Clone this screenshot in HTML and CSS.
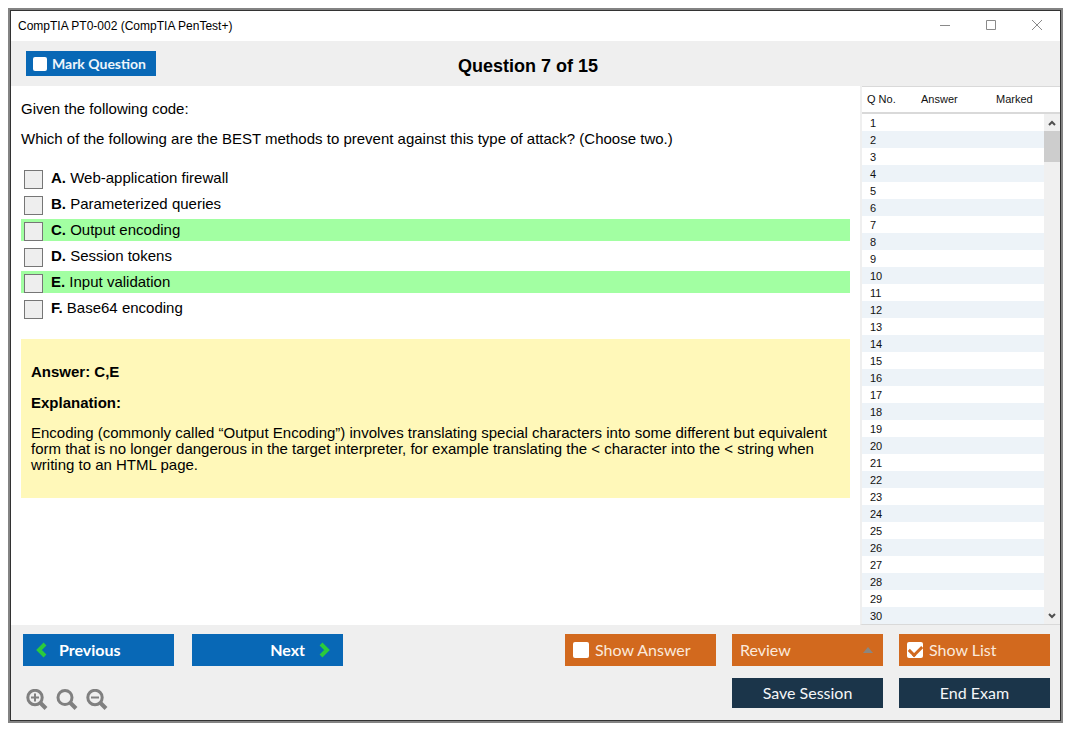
FILE: index.html
```html
<!DOCTYPE html>
<html lang="en">
<head>
<meta charset="utf-8">
<title>CompTIA PT0-002 (CompTIA PenTest+)</title>
<link rel="stylesheet" href="styles.css">
</head>
<body>
<div class="window">
  <header class="titlebar">
    <span class="titlebar-text">CompTIA PT0-002 (CompTIA PenTest+)</span>
    <div class="window-controls">
      <button type="button" aria-label="Minimize"><svg width="12" height="12" viewBox="0 0 12 12"><path d="M1 5.500h10"/></svg></button>
      <button type="button" aria-label="Maximize"><svg width="12" height="12" viewBox="0 0 12 12"><path d="M1.500 .5h9v9h-9z"/></svg></button>
      <button type="button" aria-label="Close"><svg width="12" height="12" viewBox="0 0 12 12"><path d="M1 0l10 10M11 0L1 10"/></svg></button>
    </div>
  </header>

  <div class="toolbar">
    <label class="mark"><input class="tick" type="checkbox">Mark Question</label>
    <h1 class="counter">Question 7 of 15</h1>
  </div>

  <div class="main">
    <main class="question">
      <p class="prompt">Given the following code:</p>
      <p class="prompt">Which of the following are the BEST methods to prevent against this type of attack? (Choose two.)</p>
      <div class="options">
        <label class="option"><input class="box" type="checkbox"><span><b>A.</b> Web-application firewall</span></label>
        <label class="option"><input class="box" type="checkbox"><span><b>B.</b> Parameterized queries</span></label>
        <label class="option correct"><input class="box" type="checkbox"><span><b>C.</b> Output encoding</span></label>
        <label class="option"><input class="box" type="checkbox"><span><b>D.</b> Session tokens</span></label>
        <label class="option correct"><input class="box" type="checkbox"><span><b>E.</b> Input validation</span></label>
        <label class="option"><input class="box" type="checkbox"><span><b>F.</b> Base64 encoding</span></label>
      </div>
      <section class="answer">
        <p><b>Answer: C,E</b></p>
        <p><b>Explanation:</b></p>
        <p>Encoding (commonly called “Output Encoding”) involves translating special characters into some different but equivalent form that is no longer dangerous in the target interpreter, for example translating the &lt; character into the &lt; string when writing to an HTML page.</p>
      </section>
    </main>

    <aside class="list">
      <table class="list-table">
        <thead>
          <tr><th class="col-no">Q No.</th><th class="col-answer">Answer</th><th>Marked</th></tr>
        </thead>
        <tbody>
          <tr><td>1</td><td></td><td></td></tr>
          <tr><td>2</td><td></td><td></td></tr>
          <tr><td>3</td><td></td><td></td></tr>
          <tr><td>4</td><td></td><td></td></tr>
          <tr><td>5</td><td></td><td></td></tr>
          <tr><td>6</td><td></td><td></td></tr>
          <tr><td>7</td><td></td><td></td></tr>
          <tr><td>8</td><td></td><td></td></tr>
          <tr><td>9</td><td></td><td></td></tr>
          <tr><td>10</td><td></td><td></td></tr>
          <tr><td>11</td><td></td><td></td></tr>
          <tr><td>12</td><td></td><td></td></tr>
          <tr><td>13</td><td></td><td></td></tr>
          <tr><td>14</td><td></td><td></td></tr>
          <tr><td>15</td><td></td><td></td></tr>
          <tr><td>16</td><td></td><td></td></tr>
          <tr><td>17</td><td></td><td></td></tr>
          <tr><td>18</td><td></td><td></td></tr>
          <tr><td>19</td><td></td><td></td></tr>
          <tr><td>20</td><td></td><td></td></tr>
          <tr><td>21</td><td></td><td></td></tr>
          <tr><td>22</td><td></td><td></td></tr>
          <tr><td>23</td><td></td><td></td></tr>
          <tr><td>24</td><td></td><td></td></tr>
          <tr><td>25</td><td></td><td></td></tr>
          <tr><td>26</td><td></td><td></td></tr>
          <tr><td>27</td><td></td><td></td></tr>
          <tr><td>28</td><td></td><td></td></tr>
          <tr><td>29</td><td></td><td></td></tr>
          <tr><td>30</td><td></td><td></td></tr>
        </tbody>
      </table>
      <div class="scroll">
        <div class="scroll-head"></div>
        <div class="scroll-track">
          <button type="button" aria-label="Scroll up"><svg width="8" height="6" viewBox="0 0 8 6"><path d="M1 5l3-3 3 3"/></svg></button>
          <div class="scroll-thumb"></div>
          <button type="button" class="scroll-down" aria-label="Scroll down"><svg width="8" height="6" viewBox="0 0 8 6"><path d="M1 1l3 3 3-3"/></svg></button>
        </div>
      </div>
    </aside>
  </div>

  <footer class="footer">
    <div class="nav">
      <div class="nav-buttons">
        <button type="button" class="btn blue"><svg width="12" height="16" viewBox="0 0 12 16"><path d="M10 2L4 8l6 6"/></svg>Previous</button>
        <button type="button" class="btn blue next">Next<svg width="12" height="16" viewBox="0 0 12 16"><path d="M2 2l6 6-6 6"/></svg></button>
      </div>
      <div class="zoom">
        <button type="button" aria-label="Zoom in"><svg width="22" height="22" viewBox="0 0 22 22"><circle cx="9" cy="8.500" r="7.200"/><path class="handle" d="M14 13.500l6 6"/><path class="thin" d="M5 8.500h8M9 4.500v8"/></svg></button>
        <button type="button" aria-label="Reset zoom"><svg width="22" height="22" viewBox="0 0 22 22"><circle cx="9" cy="8.500" r="7"/><path class="handle" d="M14 13.500l6 6"/></svg></button>
        <button type="button" aria-label="Zoom out"><svg width="22" height="22" viewBox="0 0 22 22"><circle cx="9" cy="8.500" r="7.200"/><path class="handle" d="M14 13.500l6 6"/><path class="thin" d="M5 8.500h8"/></svg></button>
      </div>
    </div>
    <div class="actions">
      <label class="btn orange"><input class="tick" type="checkbox">Show Answer</label>
      <button type="button" class="btn orange review" aria-haspopup="menu">Review<svg width="10" height="6" viewBox="0 0 10 6"><path d="M0 6l5-6 5 6z"/></svg></button>
      <label class="btn orange"><input class="tick" type="checkbox" checked>Show List</label>
      <button type="button" class="btn navy save">Save Session</button>
      <button type="button" class="btn navy">End Exam</button>
    </div>
  </footer>
</div>
</body>
</html>
```

FILE: styles.css
```css
* { box-sizing: border-box; }

body {
  margin: 0;
  padding: 8px 12px 12px 8px;
  min-height: 100vh;
  display: flex;
  background: #fff;
  color: #000;
  font-family: "Liberation Sans", Arial, sans-serif;
  font-size: 15px;
  line-height: 16px;
}

button {
  margin: 0;
  padding: 0;
  border: 0;
  background: none;
  color: inherit;
  font: inherit;
}

svg { display: block; fill: none; }

.window {
  flex: 1;
  display: flex;
  flex-direction: column;
  border: 2px solid #838383;
  outline: 1px solid #333;
  outline-offset: -3px;
  padding: 1px;
}

.titlebar {
  display: flex;
  justify-content: space-between;
  align-items: center;
  height: 30px;
  padding: 0 17px 0 7px;
  font-size: 12px;
}

.window-controls { display: flex; gap: 34px; }
.window-controls svg { stroke: #8a8a8a; }

.toolbar {
  display: grid;
  grid-template-columns: 1fr auto 1fr;
  align-items: start;
  padding: 10px 30px 10px 15px;
  background: #efefef;
}

.mark {
  justify-self: start;
  display: flex;
  align-items: center;
  gap: 5px;
  width: 130px;
  height: 25px;
  padding-left: 7px;
  background: #0868b6;
  color: #eef5fb;
  font: bold 14px/20px Lato, sans-serif;
  white-space: nowrap;
}

.counter {
  margin: 0;
  padding-top: 5px;
  font-size: 18px;
  line-height: 20px;
}

.tick {
  appearance: none;
  flex: none;
  display: grid;
  place-items: center;
  width: 14px;
  height: 14px;
  margin: 0;
  border-radius: 2px;
  background: #fff;
}

.main { flex: 1; display: flex; }

.question { flex: 1; padding: 15px 10px 0; }

.prompt { margin: 0 0 14px; }

.options {
  display: grid;
  gap: 4px;
  margin: 20px 0;
}

.option {
  display: flex;
  align-items: center;
  gap: 8px;
  height: 22px;
  padding-left: 3px;
}

.correct { background: #a2ffa2; }

.box {
  appearance: none;
  align-self: flex-end;
  width: 19px;
  height: 19px;
  margin: 0;
  border: 1px solid #767676;
  background: #eee;
}

.answer {
  padding: 25px 10px;
  background: #fff8b9;
}

.answer p { margin: 0 0 14px; }
.answer p:first-child { margin-bottom: 15px; }
.answer p:last-child { margin: 0; }

.list {
  flex: none;
  display: flex;
  width: 200px;
  border-left: 2px solid #efefef;
  border-bottom: 1px solid #d9d9d9;
  font-size: 11px;
  color: #111;
}

.list-table {
  flex: 1;
  align-self: flex-start;
  table-layout: fixed;
  border-collapse: separate;
  border-spacing: 0;
  line-height: 15px;
}

.list-table th {
  height: 28px;
  padding: 0;
  border-top: 1px solid #d9d9d9;
  border-bottom: 2px solid #d9d9d9;
  font-weight: normal;
  text-align: left;
}

.list-table .col-no { width: 59px; padding-left: 5px; }
.list-table .col-answer { width: 75px; }

.list-table td { height: 17px; padding: 2px 0 0 8px; }
.list-table tbody tr:nth-child(even) { background: #edf3f8; }

.scroll {
  display: flex;
  flex-direction: column;
  width: 16px;
}

.scroll-head {
  height: 28px;
  border-top: 1px solid #d9d9d9;
  border-bottom: 2px solid #d9d9d9;
}

.scroll-track {
  flex: 1;
  display: flex;
  flex-direction: column;
  background: #f0f0f0;
}

.scroll-track button {
  display: grid;
  place-items: center;
  height: 17px;
}

.scroll-track svg { stroke: #505050; stroke-width: 2; }
.scroll-thumb { height: 31px; background: #cdcdcd; }
.scroll-down { margin-top: auto; }

.footer {
  display: flex;
  justify-content: space-between;
  padding: 9px 10px 9px 12px;
  background: #efefef;
}

.nav-buttons { display: flex; gap: 18px; }

.zoom {
  display: flex;
  gap: 8px;
  padding: 23px 0 0 3px;
}

.zoom svg { stroke: #808080; stroke-width: 3; }
.zoom .handle { stroke-width: 4; }
.zoom .thin { stroke-width: 2; }

.actions {
  display: grid;
  grid-template-columns: repeat(3, 151px);
  grid-template-rows: 32px 30px;
  gap: 12px 16px;
}

.btn {
  display: flex;
  align-items: center;
  font: 16px/20px Lato, sans-serif;
}

.blue {
  width: 151px;
  height: 32px;
  gap: 12px;
  padding: 0 12px;
  background: #0868b6;
  color: #fff;
  font-weight: bold;
}

.blue svg { stroke: #2bcb3c; stroke-width: 4; }
.next { justify-content: flex-end; gap: 14px; }

.orange {
  gap: 6px;
  padding: 0 8px;
  background: #d2691e;
  color: #fbe9dc;
}

.orange .tick { width: 16px; height: 16px; }

.tick:checked::before {
  content: "";
  width: 10px;
  height: 6px;
  border: solid #d2691e;
  border-width: 0 0 3px 3px;
  transform: translateY(-1px) rotate(-45deg);
}

.review { justify-content: space-between; padding-right: 10px; }
.review svg { fill: #8b8680; }

.navy {
  justify-content: center;
  background: #1b354a;
  color: #f4f6f8;
}

.save { grid-column: 2; }
```
